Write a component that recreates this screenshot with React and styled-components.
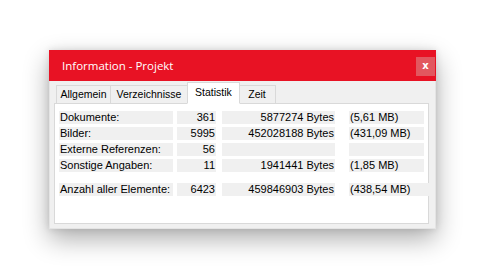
import React from "react";
import styled, { createGlobalStyle } from "styled-components";

const GlobalStyle = createGlobalStyle`
  html, body {
    margin: 0;
    padding: 0;
    background: #ffffff;
  }
  body {
    font-family: "Liberation Sans", Arial, sans-serif;
  }
`;

const rows = [
  { label: "Dokumente:", count: "361", bytes: "5877274 Bytes", mb: "(5,61 MB)" },
  { label: "Bilder:", count: "5995", bytes: "452028188 Bytes", mb: "(431,09 MB)" },
  { label: "Externe Referenzen:", count: "56", bytes: "", mb: "" },
  { label: "Sonstige Angaben:", count: "11", bytes: "1941441 Bytes", mb: "(1,85 MB)" },
];

const total = { label: "Anzahl aller Elemente:", count: "6423", bytes: "459846903 Bytes", mb: "(438,54 MB)" };

const tabs = [
  { name: "Allgemein", width: 55 },
  { name: "Verzeichnisse", width: 77 },
  { name: "Statistik", width: 53, active: true },
  { name: "Zeit", width: 37 },
];

const App = () => {
  return (
    <Page>
      <GlobalStyle />
      <Window>
        <TitleBar>
          <Title>Information - Projekt</Title>
          <CloseButton type="button">x</CloseButton>
        </TitleBar>
        <Body>
          <TabRow>
            {tabs.map((t) => (
              <Tab key={t.name} $active={t.active} $width={t.width}>
                {t.name}
              </Tab>
            ))}
          </TabRow>
          <Panel>
            {rows.map((r) => (
              <StatRow key={r.label}>
                <Cell>{r.label}</Cell>
                <Cell $right>{r.count}</Cell>
                <Cell $right>{r.bytes}</Cell>
                <Cell>{r.mb}</Cell>
              </StatRow>
            ))}
            <StatRow $total>
              <Cell>{total.label}</Cell>
              <Cell $right>{total.count}</Cell>
              <Cell $right>{total.bytes}</Cell>
              <Cell>{total.mb}</Cell>
            </StatRow>
          </Panel>
        </Body>
      </Window>
    </Page>
  );
};

const Page = styled.div`
  width: 486px;
  height: 280px;
  padding: 50px 0 0 49px;
  box-sizing: border-box;
  overflow: hidden;
`;

const Window = styled.div`
  width: 387px;
  height: 179px;
  display: flex;
  flex-direction: column;
  background: #f0f0f0;
  box-shadow: 0 10px 24px rgba(0, 0, 0, 0.32), 0 0 7px rgba(0, 0, 0, 0.12);
`;

const TitleBar = styled.div`
  height: 31px;
  flex-shrink: 0;
  display: flex;
  align-items: center;
  justify-content: space-between;
  padding: 0 1px 0 13px;
  background: #e81224;
`;

const Title = styled.span`
  font-family: "Open Sans", "Noto Sans", sans-serif;
  font-size: 11.5px;
  color: #ffffff;
  padding-bottom: 1px;
`;

const CloseButton = styled.button`
  width: 19px;
  height: 19px;
  margin-top: 2px;
  padding: 0 0 2px;
  border: none;
  background: #e2575f;
  color: #ffffff;
  font-family: "DejaVu Sans", sans-serif;
  font-size: 10px;
  font-weight: bold;
  line-height: 1;
`;

const Body = styled.div`
  flex: 1;
  display: flex;
  flex-direction: column;
  padding: 2px 6px 4px 4px;
  border: 1px solid #e4e4e4;
  border-top: none;
`;

const TabRow = styled.div`
  display: flex;
  align-items: flex-end;
  height: 21px;
  padding-left: 2px;
  position: relative;
  z-index: 1;
  margin-bottom: -1px;
`;

const Tab = styled.div`
  box-sizing: border-box;
  width: ${(p) => p.$width}px;
  height: ${(p) => (p.$active ? 22 : 19)}px;
  margin: ${(p) => (p.$active ? "0 -1px" : "0")};
  display: flex;
  align-items: center;
  justify-content: center;
  font-size: 10.5px;
  color: #000000;
  background: ${(p) => (p.$active ? "#ffffff" : "#f0f0f0")};
  border: 1px solid #d9d9d9;
  border-bottom: ${(p) => (p.$active ? "1px solid #ffffff" : "1px solid #d9d9d9")};
  border-left-width: ${(p) => (p.$active ? 1 : 0)}px;
  padding-bottom: ${(p) => (p.$active ? 3 : 1)}px;
  position: relative;
  z-index: ${(p) => (p.$active ? 2 : 1)};
  &:first-child {
    border-left-width: 1px;
  }
`;

const Panel = styled.div`
  flex: 1;
  display: flex;
  flex-direction: column;
  gap: 3px;
  padding: 7px 0 0 4px;
  background: #ffffff;
  border: 1px solid #d9d9d9;
`;

const StatRow = styled.div`
  display: grid;
  grid-template-columns: 114px 39px 113px ${(p) => (p.$total ? "82px" : "75px")};
  column-gap: 0;
  height: 13px;
  margin-top: ${(p) => (p.$total ? "8px" : "0")};
  & > :nth-child(1) {
    margin-right: 4px;
  }
  & > :nth-child(2) {
    margin-right: 6px;
  }
  & > :nth-child(3) {
    margin-right: 14px;
  }
  grid-template-columns: 118px 45px 127px ${(p) => (p.$total ? "82px" : "75px")};
`;

const Cell = styled.div`
  background: #f0f0f0;
  font-size: 11px;
  line-height: 13px;
  color: #000000;
  white-space: nowrap;
  overflow: hidden;
  text-align: ${(p) => (p.$right ? "right" : "left")};
  padding: ${(p) => (p.$right ? "0 1px 0 0" : "0 0 0 1px")};
`;

export default App;
